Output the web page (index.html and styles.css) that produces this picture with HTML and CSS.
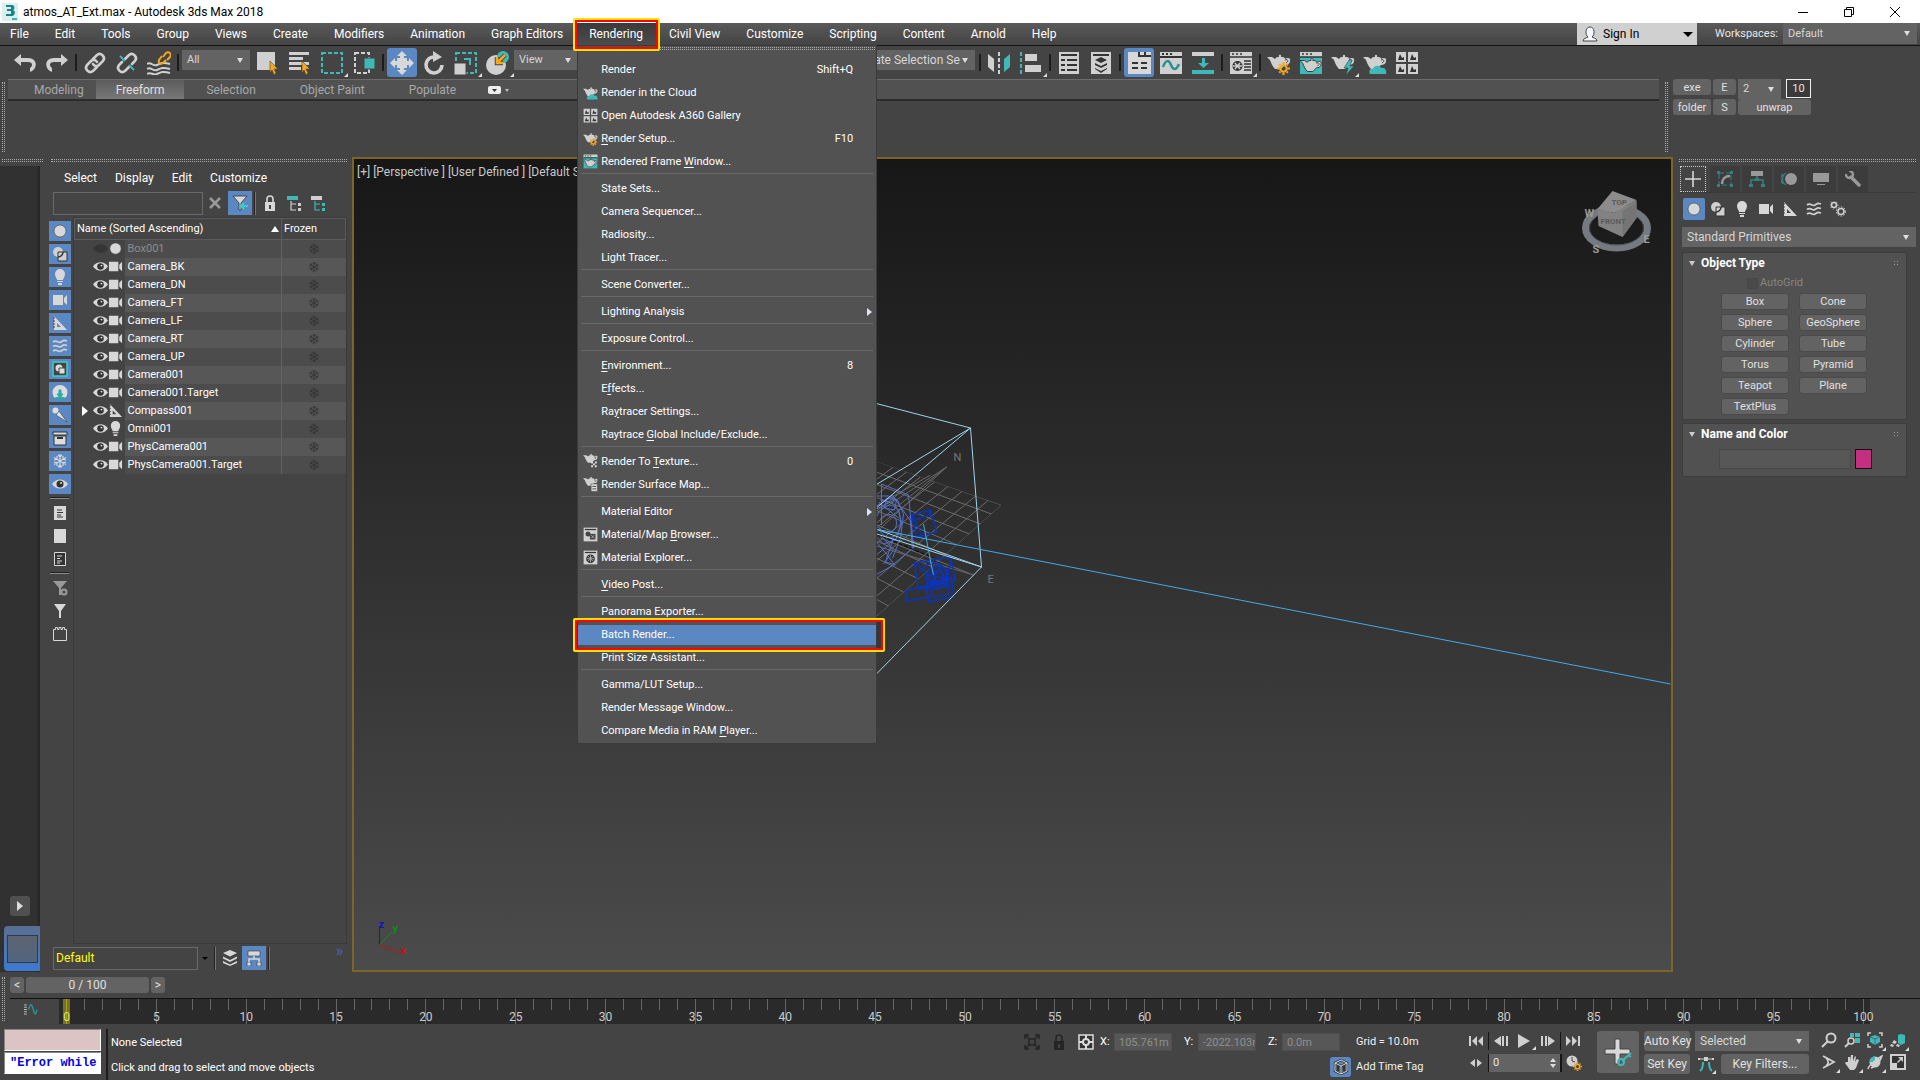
FILE: index.html
```html
<!DOCTYPE html>
<html lang="en">
<head>
<meta charset="UTF-8">
<meta name="viewport" content="width=device-width, initial-scale=1.0">
<title>atmos_AT_Ext.max - Autodesk 3ds Max 2018</title>
<link rel="stylesheet" href="styles.css">
</head>
<body>
<!-- icon set -->
<svg class="sprite" aria-hidden="true">
    <symbol id="i-undo" viewBox="0 0 22 18"><path d="M0 6l7-6v4h7c10 0 10 11 2 14v-4c3-2 3-6-2-6H7v4z" fill="#d0d0d0"/></symbol>
    <symbol id="i-redo" viewBox="0 0 22 18"><path d="M22 6l-7-6v4H8c-10 0-10 11-2 14v-4c-3-2-3-6 2-6h7v4z" fill="#d0d0d0"/></symbol>
    <symbol id="i-link" viewBox="0 0 24 24"><g fill="none" stroke="#d0d0d0" stroke-width="2.6" stroke-linecap="round"><path d="M10 8l4-4c4-3 9 2 6 6l-4 4c-2 2-5 1-6-1"/><path d="M14 16l-4 4c-4 3-9-2-6-6l4-4c2-2 5-1 6 1"/></g></symbol>
    <symbol id="i-unlink" viewBox="0 0 24 24"><g fill="none" stroke="#d0d0d0" stroke-width="2.6" stroke-linecap="round"><path d="M10 8l4-4c4-3 9 2 6 6l-3 3"/><path d="M14 16l-4 4c-4 3-9-2-6-6l3-3"/></g><path d="M5 5l5 5M14 14l5 5" stroke="#3fb8b8" stroke-width="2" fill="none"/></symbol>
    <symbol id="i-bind" viewBox="0 0 24 24"><g fill="none" stroke="#d0d0d0" stroke-width="2"><path d="M0 13c4-3 6 3 10 1s6-3 13-1M0 18c4-3 6 3 10 1s6-3 13-1M0 23c4-3 6 2 10 0s6-3 13-1"/></g><g fill="none" stroke="#f5a81c" stroke-width="2"><path d="M16 6l3-4c3-2 6 1 4 4l-3 3"/><path d="M19 9l-3 3c-3 2-5-1-4-3l3-4"/></g></symbol>
    <symbol id="i-pick" viewBox="0 0 24 24"><path d="M1 1h18v18H1z" fill="#d0d0d0"/><path d="M14 10l8 8h-4l2 4-2 2-2-5-2 3z" fill="#f5a81c" stroke="#444" stroke-width=".6"/></symbol>
    <symbol id="i-pickname" viewBox="0 0 24 24"><path d="M1 1h20v3H1zM1 6h14v3H1zM1 11h20v3H1zM1 16h12v3H1z" fill="#d0d0d0"/><path d="M14 10l8 8h-4l2 4-2 2-2-5-2 3z" fill="#f5a81c" stroke="#444" stroke-width=".6"/></symbol>
    <symbol id="i-region" viewBox="0 0 24 24"><path d="M2 2h20v20H2z" fill="none" stroke="#3fb8b8" stroke-width="2" stroke-dasharray="4 2"/></symbol>
    <symbol id="i-cross" viewBox="0 0 24 24"><path d="M3 2h14v20H3z" fill="none" stroke="#d0d0d0" stroke-width="2" stroke-dasharray="4 2"/><path d="M12 7h11v11H12z" fill="#3fb8b8" stroke="#444"/></symbol>
    <symbol id="i-move" viewBox="0 0 24 24"><path d="M12 0l5 5h-3v5h5V7l5 5-5 5v-3h-5v5h3l-5 5-5-5h3v-5H5v3l-5-5 5-5v3h5V5H7z" fill="#d8d8d8"/><path d="M7 7h3v3H7zM14 7h3v3h-3zM7 14h3v3H7zM14 14h3v3h-3z" fill="#d8d8d8"/></symbol>
    <symbol id="i-rotate" viewBox="0 0 24 24"><path d="M13 6a8 8 0 1 0 7 8" fill="none" stroke="#d0d0d0" stroke-width="3.600"/><path d="M11 0l9 6-9 5z" fill="#d0d0d0"/></symbol>
    <symbol id="i-scale" viewBox="0 0 24 24"><path d="M2 2h20v20H2z" fill="none" stroke="#3fb8b8" stroke-width="2" stroke-dasharray="4 2"/><path d="M0 12h12v12H0z" fill="#d0d0d0" stroke="#444"/><path d="M10 8h6v6" fill="none" stroke="#3fb8b8" stroke-width="2"/></symbol>
    <symbol id="i-place" viewBox="0 0 24 24"><circle cx="10" cy="14" r="10" fill="#d0d0d0"/><circle cx="17" cy="6" r="6" fill="#3fb8b8"/><path d="M19 4l-7 7M11 6v6h6" fill="none" stroke="#444" stroke-width="4.500"/><path d="M19 4l-7 7M11 6v6h6" fill="none" stroke="#f5a81c" stroke-width="2.600"/></symbol>
    <symbol id="i-mirror" viewBox="0 0 24 24"><path d="M1 3l6 5v13l-6-5z" fill="#d0d0d0"/><path d="M12 1v22" stroke="#d0d0d0" stroke-width="2" stroke-dasharray="4 2"/><path d="M23 3l-6 5v13l6-5z" fill="#3fb8b8"/></symbol>
    <symbol id="i-align" viewBox="0 0 24 24"><path d="M2 1v22" stroke="#3fb8b8" stroke-width="2" stroke-dasharray="4 2"/><path d="M6 3h12v7H6zM6 14h16v7H6z" fill="#d0d0d0"/></symbol>
    <symbol id="i-list" viewBox="0 0 24 24"><path d="M2 1h20v22H2z" fill="#d0d0d0"/><path d="M4 4h16M4 9h4M10 9h10M4 14h4M10 14h10M4 19h4M10 19h10" stroke="#333" stroke-width="2"/></symbol>
    <symbol id="i-layers" viewBox="0 0 24 24"><path d="M2 1h20v22H2z" fill="#d0d0d0"/><path d="M4 4h16" stroke="#333" stroke-width="2"/><path d="M12 6l6 3-6 3-6-3zM6 12l6 3 6-3v2l-6 3-6-3zM6 17l6 3 6-3v1l-6 4-6-4z" fill="#333"/></symbol>
    <symbol id="i-ribbon" viewBox="0 0 24 24"><path d="M1 1h23v22H1z" fill="#d8d8d8"/><path d="M12 1v4h12M18 1v4M5 12h6M14 12h6M5 17h6M14 17h6" stroke="#333" stroke-width="2" fill="none"/></symbol>
    <symbol id="i-curve" viewBox="0 0 24 24"><path d="M1 1h22v22H1z" fill="#d0d0d0"/><path d="M1 6h22M3 3h2M7 3h2M11 3h2" stroke="#333" stroke-width="2"/><path d="M4 16c3-8 6-7 8-2s5 6 8-1" fill="none" stroke="#2a8f92" stroke-width="2.500"/></symbol>
    <symbol id="i-dope" viewBox="0 0 24 24"><path d="M1 1h22v4H1z" fill="#d0d0d0"/><path d="M1 19h22v4H1zM11 7h3v5h4l-5.500 5L7 12h4z" fill="#3fb8b8"/></symbol>
    <symbol id="i-mated" viewBox="0 0 24 24"><path d="M1 1h22v22H1z" fill="#d0d0d0"/><path d="M1 6h22M3 3h2M7 3h2M11 3h2M15 10h7M15 13h7M15 16h7M15 19h7" stroke="#333" stroke-width="1.500"/><circle cx="8.500" cy="15" r="5" fill="#333"/><path d="M6 12l5 6M11 12l-5 6M4 15h9" stroke="#d0d0d0" stroke-width="1.500"/></symbol>
    <symbol id="teapot" viewBox="0 0 24 24"><path d="M0 6h5l3 2c1-2 3-2 4-2-1-3 3-3 2 0 2 0 4 0 4 2 3-2 6-1 5 2 0 3-3 4-5 4l-4 4H8C6 16 4 12 3 9z" fill="#d0d0d0"/><path d="M18 9c3-1 4 1 1 3" fill="none" stroke="#444" stroke-width="1"/></symbol>
    <symbol id="gear" viewBox="0 0 12 12"><circle cx="6" cy="6" r="3" fill="none" stroke="#f5a81c" stroke-width="2"/><path d="M6 0v2M6 10v2M0 6h2M10 6h2M2 2l1 1M9 9l1 1M10 2L9 3M3 9l-1 1" stroke="#f5a81c" stroke-width="2"/></symbol>
    <symbol id="i-rsetup" viewBox="0 0 24 24"><use href="#teapot"/><use href="#gear" x="10" y="11" width="13" height="13"/></symbol>
    <symbol id="i-rframe" viewBox="0 0 24 24"><path d="M1 1h22v22H1z" fill="#3fb8b8"/><path d="M1 1h22v5H1z" fill="#d0d0d0"/><path d="M3 3h2M7 3h2M11 3h2M1 6h22" stroke="#333" stroke-width="1.600"/><g stroke="#333" stroke-width="1"><use href="#teapot" x="1" y="4" width="22" height="22"/></g></symbol>
    <symbol id="i-rprod" viewBox="0 0 24 24"><use href="#teapot"/><path d="M18 9l-5 8h4l-2 7 8-9h-4l2-6z" fill="#3fb8b8" stroke="#444" stroke-width=".6"/></symbol>
    <symbol id="i-rcloud" viewBox="0 0 24 24"><use href="#teapot"/><path d="M7 23c-2-4 1-6 3-5 1-4 7-4 8-1 4-1 6 3 5 6z" fill="#3fb8b8"/></symbol>
    <symbol id="i-gallery" viewBox="0 0 24 24"><path d="M1 1h10v10H1zM13 1h10v10H13zM1 13h10v10H1zM13 13h10v10H13z" fill="#d0d0d0"/><path d="M3 9l2-6 2 4 2-1v3zM15 9l2-6 2 4 2-1v3zM3 21l2-6 2 4 2-1v3zM15 21l2-6 2 4 2-1v3z" fill="#333"/></symbol>
    <symbol id="i-rtex" viewBox="0 0 24 24"><use href="#teapot" y="-4"/><path d="M13 12h3v3h-3zM19 12h3v3h-3zM16 15h3v3h-3zM13 18h3v3h-3zM19 18h3v3h-3z" fill="#ddd"/></symbol>
    <symbol id="i-rsurf" viewBox="0 0 24 24"><use href="#teapot" y="-4"/><path d="M13 11h10v12H13z" fill="#ddd" stroke="#555"/><path d="M15 15h6M15 19h6" stroke="#444" stroke-width="1.500"/></symbol>
    <symbol id="i-matx" viewBox="0 0 24 24"><path d="M1 1h22v22H1z" fill="#d0d0d0"/><path d="M3 4h18" stroke="#333" stroke-width="2"/><circle cx="12" cy="14" r="7" fill="#333"/><path d="M8 10l8 8M16 10l-8 8M6 14h12M12 8v12" stroke="#aaa" stroke-width="1.500"/></symbol>
    <symbol id="i-matb" viewBox="0 0 24 24"><path d="M1 1h22v22H1z" fill="#d0d0d0"/><path d="M3 4h18" stroke="#333" stroke-width="2"/><circle cx="8" cy="11" r="4" fill="#444"/><path d="M11 11h9v9h-9z" fill="#444"/><path d="M13 13l5 5M18 13l-5 5" stroke="#ccc"/></symbol>

    <symbol id="s-geo" viewBox="0 0 16 16"><circle cx="8" cy="8" r="6" fill="#d8d8d8" stroke="#444" stroke-width=".6"/></symbol>
    <symbol id="s-shape" viewBox="0 0 16 16"><circle cx="6" cy="6" r="5" fill="#d0d0d0"/><path d="M6 6h9v9H6z" fill="#d0d0d0" stroke="#333"/><path d="M11 6a5 5 0 0 1-5 5" fill="none" stroke="#333" stroke-width="1.500"/></symbol>
    <symbol id="s-light" viewBox="0 0 16 16"><path d="M8 0a5 5 0 0 1 5 5c0 3-2 4-2 6H5c0-2-2-3-2-6a5 5 0 0 1 5-5zM5 12h6v1H5zM6 14h4v2H6z" fill="#d8d8d8"/></symbol>
    <symbol id="s-cam" viewBox="0 0 16 16"><path d="M1 3h10v10H1zM15 3v10l-3-3V6z" fill="#d8d8d8"/></symbol>
    <symbol id="s-help" viewBox="0 0 16 16"><path d="M2 1l13 14H2zM5 8v4h4z" fill="#d8d8d8" fill-rule="evenodd"/><path d="M1 3h2M1 6h2M1 9h2M1 12h2" stroke="#444"/></symbol>
    <symbol id="s-warp" viewBox="0 0 16 16"><path d="M1 4c4-3 5 2 8 0s3-2 6-1M1 8.500c4-3 5 2 8 0s3-2 6-1M1 13c4-3 5 2 8 0s3-2 6-1" fill="none" stroke="#d0d0d0" stroke-width="1.600"/></symbol>
    <symbol id="s-group" viewBox="0 0 16 16"><path d="M1 1h14v14H1z" fill="#444" stroke="#3fd0c8" stroke-width="1.500"/><circle cx="7" cy="7" r="3.500" fill="#ddd"/><path d="M7 7h6v6H7z" fill="#ddd" stroke="#444"/></symbol>
    <symbol id="s-xref" viewBox="0 0 16 16"><path d="M3 14a7.500 7.500 0 1 1 10 0z" fill="#ddd"/><path d="M7 6h2v4h2l-3 4-3-4h2zM4 13v2h8v-2" fill="#2fa8a4" stroke="#2fa8a4"/></symbol>
    <symbol id="s-bone" viewBox="0 0 16 16"><circle cx="3.500" cy="3.500" r="3" fill="#ddd"/><path d="M7 4l8 11L4 8z" fill="#ddd" stroke="#444" stroke-width=".6"/></symbol>
    <symbol id="s-box" viewBox="0 0 16 16"><path d="M1 2h14v3H1zM2 6h12v9H2z" fill="#ddd" stroke="#333"/><path d="M5 8h6" stroke="#333" stroke-width="2"/></symbol>
    <symbol id="s-snow" viewBox="0 0 16 16"><path d="M8 1v14M2 4.500l12 7M14 4.500l-12 7M6 2l2 2 2-2M6 14l2-2 2 2M2 7l3-1V3M14 9l-3 1v3M2 9l3 1v3M14 7l-3-1V3" fill="none" stroke="currentColor" stroke-width="1.200"/></symbol>
    <symbol id="s-eye" viewBox="0 0 16 16"><path d="M0 8c4-6 12-6 16 0-4 6-12 6-16 0z" fill="#d8d8d8"/><circle cx="8" cy="8" r="3.500" fill="#333"/><circle cx="9" cy="7" r="1" fill="#ddd"/></symbol>
    <symbol id="s-eyeoff" viewBox="0 0 16 16"><path d="M0 8c4-6 12-6 16 0-4 6-12 6-16 0z" fill="#353535"/></symbol>
    <symbol id="s-docall" viewBox="0 0 16 16"><path d="M2 1h12v14H2z" fill="#d8d8d8"/><path d="M5 5h5M5 7.500h6M5 10h4M5 12h6" stroke="#333"/></symbol>
    <symbol id="s-doc" viewBox="0 0 16 16"><path d="M2 1h12v14H2z" fill="#d8d8d8"/></symbol>
    <symbol id="s-docinv" viewBox="0 0 16 16"><path d="M2.500 1.500h11v13h-11z" fill="#333" stroke="#d8d8d8"/><path d="M5 5h5M5 7.500h3M5 10h5M5 12h3" stroke="#ddd"/></symbol>
    <symbol id="s-funnel" viewBox="0 0 16 16"><path d="M2 1h12L9 8v7H7V8z" fill="#d8d8d8"/></symbol>
    <symbol id="s-funnelgear" viewBox="0 0 16 16"><path d="M1 1h14L9 8v7H7V8z" fill="#999"/><circle cx="12" cy="12" r="2.500" fill="#444" stroke="#999" stroke-width="2"/></symbol>
    <symbol id="s-castle" viewBox="0 0 16 16"><path d="M1.500 3.500h2v-2h2v2h1.500v-2h2v2h1.500v-2h2v2h2v11h-13z" fill="none" stroke="#d8d8d8"/></symbol>
    <symbol id="s-filter" viewBox="0 0 16 16"><path d="M1 1h14L9 8v7H7V8z" fill="#d8d8d8" stroke="#333" stroke-width=".8"/><path d="M16 11h-5M12 8l-3 3 3 3" fill="none" stroke="#35d0c8" stroke-width="2"/></symbol>
    <symbol id="s-lock" viewBox="0 0 16 16"><path d="M5 7V4a3 3 0 0 1 6 0v3" fill="none" stroke="currentColor" stroke-width="1.600"/><path d="M3 7h10v9H3z" fill="currentColor"/><path d="M8 10v4" stroke="#444" stroke-width="2"/></symbol>
    <symbol id="s-treea" viewBox="0 0 16 16"><path d="M1 1h11v4H1z" fill="#3fb8b8"/><path d="M5 6v9h5M5 9h5" fill="none" stroke="#d0d0d0" stroke-width="1.200"/><path d="M12 8h3v3h-3zM12 13h3v3h-3z" fill="#d0d0d0"/></symbol>
    <symbol id="s-treeb" viewBox="0 0 16 16"><path d="M1 1h11v4H1z" fill="#d0d0d0"/><path d="M5 6v9h5M5 9h5" fill="none" stroke="#3fb8b8" stroke-width="1.200"/><path d="M12 8h3v3h-3zM12 13h3v3h-3z" fill="#3fb8b8"/></symbol>
    <symbol id="s-stack" viewBox="0 0 16 16"><path d="M8 0l7 3-7 3.500L1 3zM1 6.500L8 10l7-3.500v2L8 12 1 8.500zM1 11l7 3.500L15 11v2l-7 3-7-3z" fill="#d8d8d8"/></symbol>
    <symbol id="s-hier" viewBox="0 0 16 16"><path d="M2 1h12v5H2zM1 12h4v4H1zM11 12h4v4h-4z" fill="#d8d8d8" stroke="#333" stroke-width=".6"/><path d="M8 6v3M3 12V9h10v3" fill="none" stroke="#d8d8d8" stroke-width="1.500"/></symbol>
    <symbol id="s-gears" viewBox="0 0 16 16"><circle cx="4" cy="4" r="2.500" fill="none" stroke="#d0d0d0" stroke-width="1.600" /><circle cx="4" cy="4" r="4" fill="none" stroke="#d0d0d0" stroke-dasharray="1 2"/><circle cx="11" cy="10.500" r="3" fill="none" stroke="#d0d0d0" stroke-width="1.600"/><circle cx="11" cy="10.500" r="4.600" fill="none" stroke="#d0d0d0" stroke-dasharray="1.500 1.500"/></symbol>
    <symbol id="t-plus" viewBox="0 0 16 16"><path d="M8 0v16M0 8h16" stroke="#d8d8d8" stroke-width="1.600"/></symbol>
    <symbol id="t-modify" viewBox="0 0 16 16"><path d="M2 2h12v12H2z" fill="none" stroke="#35807e" stroke-dasharray="5 2"/><path d="M5 13c0-5 3-8 8-8" fill="none" stroke="#999" stroke-width="2.500"/><path d="M0 0h3v3H0zM13 0h3v3h-3zM0 13h3v3H0zM13 13h3v3h-3z" fill="#35807e"/></symbol>
    <symbol id="t-hier" viewBox="0 0 16 16"><path d="M2 0h12v5H2z" fill="#999"/><path d="M8 5v4M2 13V9h12v4" fill="none" stroke="#35807e" stroke-width="1.500"/><path d="M0 13h4v3H0zM12 13h4v3h-4zM6 7h4v3H6z" fill="#35807e"/></symbol>
    <symbol id="t-motion" viewBox="0 0 16 16"><circle cx="10" cy="8" r="6" fill="#999"/><path d="M5 2a7 7 0 0 0 0 12M2 3a7 7 0 0 0 0 10" fill="none" stroke="#35807e" stroke-width="1.200"/></symbol>
    <symbol id="t-display" viewBox="0 0 16 16"><path d="M0 2h16v9H0zM4 13h8v1H4z" fill="#999"/></symbol>
    <symbol id="t-util" viewBox="0 0 16 16"><path d="M6 6l8 8" stroke="#999" stroke-width="3.500" stroke-linecap="round"/><path d="M1 3a3.500 3.500 0 1 0 3-3" fill="none" stroke="#999" stroke-width="2.400"/></symbol>

    <symbol id="p-start" viewBox="0 0 16 16"><path d="M1 3h2v10H1zM9 3v10L4 8zM15 3v10l-5-5z" fill="#d0d0d0"/></symbol>
    <symbol id="p-prev" viewBox="0 0 16 16"><path d="M8 3v10L1 8zM9 3h2v10H9zM13 3h2v10h-2z" fill="#d0d0d0"/></symbol>
    <symbol id="p-play" viewBox="0 0 16 16"><path d="M2 1l12 7-12 7z" fill="#d0d0d0"/></symbol>
    <symbol id="p-next" viewBox="0 0 16 16"><path d="M8 3v10l7-5zM1 3h2v10H1zM5 3h2v10H5z" fill="#d0d0d0"/></symbol>
    <symbol id="p-end" viewBox="0 0 16 16"><path d="M13 3h2v10h-2zM1 3v10l5-5zM7 3v10l5-5z" fill="#d0d0d0"/></symbol>
    <symbol id="p-key" viewBox="0 0 16 16"><path d="M7 4v8L2 8zM9 4v8l5-4z" fill="#d0d0d0"/></symbol>
    <symbol id="p-time" viewBox="0 0 16 16"><circle cx="6" cy="6" r="5.500" fill="#d0d0d0"/><path d="M6 2v4l3 1" fill="none" stroke="#444"/><use href="#gear" x="7" y="7" width="9" height="9"/></symbol>
    <symbol id="p-setkey" viewBox="0 0 30 30"><path d="M12 2h5v10h10v5H17v10h-5V17H2v-5h10z" fill="#d8d8d8" stroke="#444"/><path d="M19 24l9-8M25 18l3 2" stroke="#3fb8b8" stroke-width="2"/><circle cx="18" cy="25" r="3" fill="none" stroke="#3fb8b8" stroke-width="2"/></symbol>
    <symbol id="p-tan" viewBox="0 0 16 16"><path d="M2 3h12" stroke="#d0d0d0"/><path d="M6 1h4v4H6zM0 2h2v2H0zM14 2h2v2h-2z" fill="#d0d0d0"/><path d="M2 15c3-2 3-6 3-9M14 15c-3-2-3-6-3-9" fill="none" stroke="#3fb8b8" stroke-width="2"/></symbol>
    <symbol id="n-zoom" viewBox="0 0 16 16"><circle cx="10" cy="6" r="4.500" fill="none" stroke="#d0d0d0" stroke-width="2"/><path d="M7 9l-6 6" stroke="#d0d0d0" stroke-width="2"/></symbol>
    <symbol id="n-zoomall" viewBox="0 0 16 16"><path d="M6 1h4v4H6zM11 1h5v4h-5zM11 6h5v5h-5z" fill="#3fb8b8"/><circle cx="7" cy="9" r="3" fill="#444" stroke="#d0d0d0" stroke-width="1.500"/><path d="M5 11l-4 4" stroke="#d0d0d0" stroke-width="2"/></symbol>
    <symbol id="n-extents" viewBox="0 0 16 16"><path d="M1 4V1h3M12 1h3v3M15 12v3h-3M4 15H1v-3" fill="none" stroke="#d0d0d0" stroke-width="1.500"/><path d="M8 3l5 2v5l-5 3-5-3V5z" fill="#3fb8b8"/><path d="M3 5l5 2 5-2M8 7v6" fill="none" stroke="#444" stroke-width=".6"/></symbol>
    <symbol id="n-extall" viewBox="0 0 16 16"><path d="M11 2l4 1v8l-4 2-3-2V3z" fill="#3fb8b8"/><path d="M4 8l3 2-2 2-3-1zM1 12l3 1-1 2-3-1zM7 12l3 1-1 2-3-1z" fill="#d0d0d0"/></symbol>
    <symbol id="n-fov" viewBox="0 0 16 16"><path d="M2 2l11 6-11 6M5 4c3 2 3 6 0 8" fill="none" stroke="#d0d0d0" stroke-width="1.800"/></symbol>
    <symbol id="n-pan" viewBox="0 0 16 16"><path d="M4 8V3h2v4l1-6h2v6l2-5 1 1-1 5 2-3 2 1-3 8-2 2H6l-5-7 1-1z" fill="#d0d0d0"/></symbol>
    <symbol id="n-orbit" viewBox="0 0 16 16"><circle cx="8" cy="8" r="5.500" fill="#d0d0d0"/><path d="M8 8V2a6 6 0 0 0-5 6z" fill="#3fb8b8"/><path d="M1 15c1-5 12-12 14-13-1 4-7 11-11 12" fill="none" stroke="#d0d0d0" stroke-width="1.500"/></symbol>
    <symbol id="n-max" viewBox="0 0 16 16"><path d="M1 1h14v14H1z" fill="#333" stroke="#d0d0d0" stroke-width="2"/><path d="M1 9h6v6H1zM8 3h5v5l-2-2-3 3-1-1 3-3z" fill="#d0d0d0"/></symbol>
    <symbol id="b-iso" viewBox="0 0 16 16"><path d="M1 5V1h4M11 1h4v4M15 11v4h-4M5 15H1v-4M5 5h6v6H5zM2 2l3 3M14 2l-3 3M14 14l-3-3M2 14l3-3" fill="none" stroke="#252525" stroke-width="1.500"/></symbol>
    <symbol id="b-abs" viewBox="0 0 16 16"><path d="M1 1h14v14H1z" fill="#333" stroke="#ddd" stroke-width="1.500"/><circle cx="8" cy="8" r="3" fill="none" stroke="#ddd" stroke-width="2"/><path d="M8 1v4M8 11v4M1 8h4M11 8h4" stroke="#ddd" stroke-width="2"/></symbol>
    <symbol id="b-tag" viewBox="0 0 16 16"><path d="M8 1l6 3v8l-6 3-6-3V4zM2 4l6 3 6-3M8 7v8M5 5v7M11 5v7" fill="none" stroke="#333" stroke-width="2.400"/><path d="M8 1l6 3v8l-6 3-6-3V4zM2 4l6 3 6-3M8 7v8" fill="none" stroke="#ddd"/></symbol>
</svg>

<div class="app">
    <header class="titlebar">
        <svg class="logo" viewBox="0 0 16 18"><path d="M0 0h16v18H0z" fill="#dceeee"/><path d="M4 2h6c3 0 3 5 1 5 3 1 2 6-1 6H4v-2h5V8H5V6h4V4H4z" fill="#12868a"/><path d="M10 15h5v2h-5z" fill="#3bb"/></svg>
        <h1 class="title">atmos_AT_Ext.max - Autodesk 3ds Max 2018</h1>
        <div class="window-buttons">
            <button aria-label="Minimize"><svg viewBox="0 0 12 12"><path d="M1 6.500h10" stroke="#000"/></svg></button>
            <button aria-label="Restore"><svg viewBox="0 0 12 12"><path d="M1.500 3.500h7v7h-7zM3.500 3.500v-2h7v7h-2" fill="none" stroke="#000"/></svg></button>
            <button aria-label="Close"><svg viewBox="0 0 12 12"><path d="M1 1l10 10M11 1L1 11" stroke="#000" fill="none"/></svg></button>
        </div>
    </header>

    <nav class="menubar">
        <ul class="menus">
            <li><button>File</button></li>
            <li><button>Edit</button></li>
            <li><button>Tools</button></li>
            <li><button>Group</button></li>
            <li><button>Views</button></li>
            <li><button>Create</button></li>
            <li><button>Modifiers</button></li>
            <li><button>Animation</button></li>
            <li><button>Graph Editors</button></li>
            <li class="open">
                <button>Rendering</button>
                <div class="dropdown">
                    <div class="grip"></div>
                    <button class="item">Render<kbd>Shift+Q</kbd></button>
                    <button class="item"><svg><use href="#i-rcloud"/></svg>Render in the Cloud</button>
                    <button class="item"><svg><use href="#i-gallery"/></svg>Open Autodesk A360 Gallery</button>
                    <button class="item"><svg><use href="#i-rsetup"/></svg><span><u>R</u>ender Setup...</span><kbd>F10</kbd></button>
                    <button class="item"><svg><use href="#i-rframe"/></svg><span>Rendered Frame <u>W</u>indow...</span></button>
                    <hr>
                    <button class="item">State Sets...</button>
                    <button class="item">Camera Sequencer...</button>
                    <button class="item">Radiosity...</button>
                    <button class="item">Light Tracer...</button>
                    <hr>
                    <button class="item">Scene Converter...</button>
                    <hr>
                    <button class="item more">Lighting Analysis</button>
                    <hr>
                    <button class="item">Exposure Control...</button>
                    <hr>
                    <button class="item"><span><u>E</u>nvironment...</span><kbd>8</kbd></button>
                    <button class="item"><span>E<u>f</u>fects...</span></button>
                    <button class="item"><span>Ra<u>y</u>tracer Settings...</span></button>
                    <button class="item"><span>Raytrace <u>G</u>lobal Include/Exclude...</span></button>
                    <hr>
                    <button class="item"><svg><use href="#i-rtex"/></svg><span>Render To <u>T</u>exture...</span><kbd>0</kbd></button>
                    <button class="item"><svg><use href="#i-rsurf"/></svg>Render Surface Map...</button>
                    <hr>
                    <button class="item more">Material Editor</button>
                    <button class="item"><svg><use href="#i-matb"/></svg><span>Material/Map <u>B</u>rowser...</span></button>
                    <button class="item"><svg><use href="#i-matx"/></svg>Material Explorer...</button>
                    <hr>
                    <button class="item"><span><u>V</u>ideo Post...</span></button>
                    <hr>
                    <button class="item">Panorama Exporter...</button>
                    <button class="item selected">Batch Render...<i class="callout"></i></button>
                    <button class="item">Print Size Assistant...</button>
                    <hr>
                    <button class="item">Gamma/LUT Setup...</button>
                    <button class="item">Render Message Window...</button>
                    <button class="item"><span>Compare Media in RAM <u>P</u>layer...</span></button>
                </div>
                <i class="callout"></i>
            </li>
            <li><button>Civil View</button></li>
            <li><button>Customize</button></li>
            <li><button>Scripting</button></li>
            <li><button>Content</button></li>
            <li><button>Arnold</button></li>
            <li><button>Help</button></li>
        </ul>
        <button class="signin">
            <svg viewBox="0 0 16 16"><path d="M1 15c0-3 4-3 5-4-3-2-3-10 2-10s5 8 2 10c1 1 5 1 5 4z" fill="#f4f7fb" stroke="#444"/></svg>
            <span>Sign In</span>
            <i class="caret"></i>
        </button>
        <label class="workspaces-label" for="workspace">Workspaces:</label>
        <select class="workspace" id="workspace"><option>Default</option></select>
    </nav>

    <div class="toolbar">
        <button aria-label="Undo"><svg class="sm"><use href="#i-undo"/></svg></button>
        <button aria-label="Redo"><svg class="sm"><use href="#i-redo"/></svg></button>
        <i class="sep"></i>
        <button aria-label="Link"><svg><use href="#i-link"/></svg></button>
        <button aria-label="Unlink"><svg><use href="#i-unlink"/></svg></button>
        <button aria-label="Bind to Space Warp"><svg><use href="#i-bind"/></svg></button>
        <i class="sep"></i>
        <select class="filter" aria-label="Selection Filter"><option>All</option></select>
        <button aria-label="Select Object"><svg><use href="#i-pick"/></svg></button>
        <button aria-label="Select by Name"><svg><use href="#i-pickname"/></svg></button>
        <button class="fly" aria-label="Selection Region"><svg><use href="#i-region"/></svg></button>
        <button aria-label="Window/Crossing"><svg><use href="#i-cross"/></svg></button>
        <i class="sep"></i>
        <button class="active" aria-label="Move"><svg><use href="#i-move"/></svg></button>
        <button aria-label="Rotate"><svg><use href="#i-rotate"/></svg></button>
        <button class="fly" aria-label="Scale"><svg><use href="#i-scale"/></svg></button>
        <button class="fly" aria-label="Place"><svg><use href="#i-place"/></svg></button>
        <select class="coords" aria-label="Reference Coordinate System"><option>View</option></select>
        <select class="selset" aria-label="Named Selection Sets"><option>Create Selection Se</option></select>
        <i class="sep"></i>
        <button aria-label="Mirror"><svg><use href="#i-mirror"/></svg></button>
        <button class="fly" aria-label="Align"><svg><use href="#i-align"/></svg></button>
        <i class="sep"></i>
        <button aria-label="Scene Explorer"><svg><use href="#i-list"/></svg></button>
        <button aria-label="Layer Explorer"><svg><use href="#i-layers"/></svg></button>
        <i class="sep"></i>
        <button class="active" aria-label="Toggle Ribbon"><svg><use href="#i-ribbon"/></svg></button>
        <button aria-label="Curve Editor"><svg><use href="#i-curve"/></svg></button>
        <button aria-label="Schematic View"><svg><use href="#i-dope"/></svg></button>
        <i class="sep"></i>
        <button class="fly" aria-label="Material Editor"><svg><use href="#i-mated"/></svg></button>
        <i class="sep"></i>
        <button aria-label="Render Setup"><svg><use href="#i-rsetup"/></svg></button>
        <button aria-label="Rendered Frame Window"><svg><use href="#i-rframe"/></svg></button>
        <button class="fly" aria-label="Render Production"><svg><use href="#i-rprod"/></svg></button>
        <button aria-label="Render in the Cloud"><svg><use href="#i-rcloud"/></svg></button>
        <button aria-label="Open A360 Gallery"><svg><use href="#i-gallery"/></svg></button>
    </div>

    <div class="ribbon-row">
        <div class="vgrip"></div>
        <div class="ribbon">
            <button>Modeling</button>
            <button class="current">Freeform</button>
            <button>Selection</button>
            <button>Object Paint</button>
            <button>Populate</button>
            <button class="ribbon-menu" aria-label="Ribbon options"><svg viewBox="0 0 22 10"><rect width="13" height="8" y="1" rx="2" fill="#eee"/><path d="M4 4h5L6.500 7z" fill="#333"/><path d="M17 4h4l-2 3z" fill="#bbb"/></svg></button>
        </div>
        <div class="scripts">
            <div class="vgrip"></div>
            <div class="script-grid">
                <button class="btn">exe</button>
                <button class="btn">E</button>
                <select aria-label="Count"><option>2</option></select>
                <input type="text" value="10" aria-label="Size">
                <button class="btn">folder</button>
                <button class="btn">S</button>
                <button class="btn unwrap">unwrap</button>
            </div>
        </div>
    </div>

    <main class="workarea">
        <aside class="strip">
            <div class="grip"></div>
            <div class="strip-body">
                <button class="expand" aria-label="Expand"><i></i></button>
                <button class="layout" aria-label="Viewport Layout"><i></i></button>
            </div>
        </aside>

        <section class="explorer">
            <div class="grip"></div>
            <div class="explorer-menu">
                <button>Select</button><button>Display</button><button>Edit</button><button>Customize</button>
            </div>
            <div class="explorer-find">
                <input type="text" aria-label="Find">
                <button aria-label="Clear"><svg viewBox="0 0 16 16"><path d="M3 3l10 10M13 3L3 13" stroke="#999" stroke-width="2.500"/></svg></button>
                <button class="active" aria-label="Filter"><svg><use href="#s-filter"/></svg></button>
                <i class="bar"></i>
                <button aria-label="Lock"><svg><use href="#s-lock"/></svg></button>
                <button aria-label="Expand tree"><svg><use href="#s-treea"/></svg></button>
                <button aria-label="Collapse tree"><svg><use href="#s-treeb"/></svg></button>
            </div>
            <div class="explorer-body">
                <div class="categories">
                    <button class="active" aria-label="Geometry"><svg><use href="#s-geo"/></svg></button>
                    <button class="active" aria-label="Shapes"><svg><use href="#s-shape"/></svg></button>
                    <button class="active" aria-label="Lights"><svg><use href="#s-light"/></svg></button>
                    <button class="active" aria-label="Cameras"><svg><use href="#s-cam"/></svg></button>
                    <button class="active" aria-label="Helpers"><svg><use href="#s-help"/></svg></button>
                    <button class="active" aria-label="Space Warps"><svg><use href="#s-warp"/></svg></button>
                    <button class="active" aria-label="Groups"><svg><use href="#s-group"/></svg></button>
                    <button class="active" aria-label="XRefs"><svg><use href="#s-xref"/></svg></button>
                    <button class="active" aria-label="Bones"><svg><use href="#s-bone"/></svg></button>
                    <button class="active" aria-label="Containers"><svg><use href="#s-box"/></svg></button>
                    <button class="active" aria-label="Frozen"><svg><use href="#s-snow"/></svg></button>
                    <button class="active" aria-label="Hidden"><svg><use href="#s-eye"/></svg></button>
                    <hr>
                    <button aria-label="All"><svg><use href="#s-docall"/></svg></button>
                    <button aria-label="None"><svg><use href="#s-doc"/></svg></button>
                    <button aria-label="Invert"><svg><use href="#s-docinv"/></svg></button>
                    <hr>
                    <button aria-label="Configure filter"><svg><use href="#s-funnelgear"/></svg></button>
                    <button aria-label="Filter"><svg><use href="#s-funnel"/></svg></button>
                    <button aria-label="Containers"><svg><use href="#s-castle"/></svg></button>
                </div>
                <div class="tree">
                    <table>
                        <colgroup><col class="col-icons"><col><col class="col-frozen"></colgroup>
                        <thead>
                            <tr><th colspan="2">Name (Sorted Ascending)<i class="sort"></i></th><th>Frozen</th></tr>
                        </thead>
                        <tbody>
                            <tr class="off"><td><svg><use href="#s-eyeoff"/></svg><svg><use href="#s-geo"/></svg></td><td>Box001</td><td><svg><use href="#s-snow"/></svg></td></tr>
                            <tr><td><svg><use href="#s-eye"/></svg><svg><use href="#s-cam"/></svg></td><td>Camera_BK</td><td><svg><use href="#s-snow"/></svg></td></tr>
                            <tr><td><svg><use href="#s-eye"/></svg><svg><use href="#s-cam"/></svg></td><td>Camera_DN</td><td><svg><use href="#s-snow"/></svg></td></tr>
                            <tr><td><svg><use href="#s-eye"/></svg><svg><use href="#s-cam"/></svg></td><td>Camera_FT</td><td><svg><use href="#s-snow"/></svg></td></tr>
                            <tr><td><svg><use href="#s-eye"/></svg><svg><use href="#s-cam"/></svg></td><td>Camera_LF</td><td><svg><use href="#s-snow"/></svg></td></tr>
                            <tr><td><svg><use href="#s-eye"/></svg><svg><use href="#s-cam"/></svg></td><td>Camera_RT</td><td><svg><use href="#s-snow"/></svg></td></tr>
                            <tr><td><svg><use href="#s-eye"/></svg><svg><use href="#s-cam"/></svg></td><td>Camera_UP</td><td><svg><use href="#s-snow"/></svg></td></tr>
                            <tr><td><svg><use href="#s-eye"/></svg><svg><use href="#s-cam"/></svg></td><td>Camera001</td><td><svg><use href="#s-snow"/></svg></td></tr>
                            <tr><td><svg><use href="#s-eye"/></svg><svg><use href="#s-cam"/></svg></td><td>Camera001.Target</td><td><svg><use href="#s-snow"/></svg></td></tr>
                            <tr class="parent"><td><svg><use href="#s-eye"/></svg><svg><use href="#s-help"/></svg></td><td>Compass001</td><td><svg><use href="#s-snow"/></svg></td></tr>
                            <tr><td><svg><use href="#s-eye"/></svg><svg><use href="#s-light"/></svg></td><td>Omni001</td><td><svg><use href="#s-snow"/></svg></td></tr>
                            <tr><td><svg><use href="#s-eye"/></svg><svg><use href="#s-cam"/></svg></td><td>PhysCamera001</td><td><svg><use href="#s-snow"/></svg></td></tr>
                            <tr><td><svg><use href="#s-eye"/></svg><svg><use href="#s-cam"/></svg></td><td>PhysCamera001.Target</td><td><svg><use href="#s-snow"/></svg></td></tr>
                        </tbody>
                    </table>
                </div>
            </div>
            <div class="explorer-foot">
                <input type="text" value="Default" aria-label="Explorer name">
                <i class="caret"></i>
                <i class="bar"></i>
                <button aria-label="Layers"><svg><use href="#s-stack"/></svg></button>
                <button class="active" aria-label="Hierarchy"><svg><use href="#s-hier"/></svg></button>
                <i class="bar"></i>
                <span class="overflow">»</span>
            </div>
        </section>

        <section class="viewport">
            <span class="viewport-label">[+] [Perspective ] [User Defined ] [Default Shading ]</span>
            <svg class="scene" viewBox="354 159 1316 811">
                <defs>
                    <clipPath id="ground"><path d="M870 459.500L1001 505 870 622z"/></clipPath>
                </defs>
                <g clip-path="url(#ground)" stroke="#6b6b6b" fill="none">
                    <path d="M1001 505L870 459M991 514L870 470M980 524L870 482M969 534L870 495M957 545L870 508M945 555L870 522M932 567L870 538M918 579L870 555M903 592L870 575M888 606L870 596"/>
                    <path d="M1001 505L870 622M988 500L860 610M975 496L850 600M962 491L840 590M948 486L830 580M934 482L820 572M920 477L810 562M906 472L800 552M893 467L790 542"/>
                </g>
                <path d="M876 532L946 467M876 523L946 467M876 513L946 467M876 506L930 475M880 538L973 575M876 546L973 575" stroke="#686868" fill="none"/>
                <g stroke="#5572cc" fill="none">
                    <path d="M881 525v-41l27 11 5 52-18 17-20 11M876 506l16-11 18 26 2 30M876 496h12l9 4 6 14-3 24-8 20M880 500l10 2 8 8 3 14-6 16-12 4-8-8"/>
                    <path d="M876 509l18-9M878 502l20 16M876 517c8-18 24-14 24 4s-14 22-22 8M879 521c5-10 17-8 17 2s-12 14-18 4M876 542l10 12 8 11M881 536l12 14-10 14M893 538l-8 24 10 3M886 498l10 2-2 10-10-2zM876 555l16-14"/>
                </g>
                <g stroke="#0a34c0" fill="none" stroke-width="1.500">
                    <path d="M911 515l19-5 6 22-20 5zM915 520l16-6M930 510l-2 5M912 515l10 22"/>
                    <path d="M914 563l36-6 5 24-37 8zM905 591l20-5 3 11-22 4zM926 584l25-6 2 19-25 5zM930 590l18-4 1 8-17 3zM921 573c2-14 27-14 25 6M925 575l20 3-16 10 10-20 9 17-22-6M932 568l6 22M924 588l26-10M951 559l-6 22M914 563l14 12"/>
                    <circle cx="936" cy="578" r="7"/><circle cx="937" cy="577" r="11"/>
                </g>
                <path d="M876 534L933 558" stroke="#000" stroke-dasharray="4 2"/>
                <path d="M870 402L970 428 981 567 870 680M970 428L870 488M970 428L870 513M981 567L870 527M981 567L870 532" stroke="#9fd4ea" fill="none"/>
                <path d="M923 524L931 566 933 575M870 528L1670 684" stroke="#42a9ea" fill="none"/>
                <text x="953" y="461" class="compass">N</text>
                <text x="987" y="583" class="compass">E</text>

                <!-- view cube -->
                <ellipse cx="1616" cy="228" rx="31" ry="20" fill="none" stroke="#747a80" stroke-width="7"/>
                <ellipse cx="1616" cy="228" rx="27" ry="17" fill="none" stroke="#4c5055" stroke-width="1"/>
                <path d="M1612 191l24 9-22 13-17-4z" fill="#8c8c8c"/>
                <path d="M1597 209l17 4 22-13v18l-14 19-24-11z" fill="#828282"/>
                <path d="M1622 211l14-9v16l-14 19z" fill="#757575"/>
                <text x="1611" y="205" class="cube">TOP</text>
                <text x="1600" y="224" class="cube">FRONT</text>
                <text x="1584" y="217" class="dir">W</text>
                <text x="1592" y="253" class="dir">S</text>
                <text x="1643" y="243" class="dir">E</text>

                <!-- axis tripod -->
                <path d="M379 945v-19" stroke="#1414b8"/><path d="M379 945l13-14" stroke="#148a1e"/><path d="M379 945l21 8" stroke="#c01414"/>
                <text x="378" y="928" class="axis z">z</text>
                <text x="392" y="932" class="axis y">y</text>
                <text x="400" y="954" class="axis x">x</text>
            </svg>
        </section>

        <aside class="command">
            <div class="grip"></div>
            <div class="tabs">
                <button class="current" aria-label="Create"><svg><use href="#t-plus"/></svg></button>
                <button aria-label="Modify"><svg><use href="#t-modify"/></svg></button>
                <button aria-label="Hierarchy"><svg><use href="#t-hier"/></svg></button>
                <button aria-label="Motion"><svg><use href="#t-motion"/></svg></button>
                <button aria-label="Display"><svg><use href="#t-display"/></svg></button>
                <button aria-label="Utilities"><svg><use href="#t-util"/></svg></button>
            </div>
            <div class="kinds">
                <button class="active" aria-label="Geometry"><svg><use href="#s-geo"/></svg></button>
                <button aria-label="Shapes"><svg><use href="#s-shape"/></svg></button>
                <button aria-label="Lights"><svg><use href="#s-light"/></svg></button>
                <button aria-label="Cameras"><svg><use href="#s-cam"/></svg></button>
                <button aria-label="Helpers"><svg><use href="#s-help"/></svg></button>
                <button aria-label="Space Warps"><svg><use href="#s-warp"/></svg></button>
                <button aria-label="Systems"><svg><use href="#s-gears"/></svg></button>
            </div>
            <select class="primitives" aria-label="Category"><option>Standard Primitives</option></select>
            <section class="rollout">
                <h2>Object Type</h2>
                <label class="autogrid"><input type="checkbox" disabled>AutoGrid</label>
                <div class="types">
                    <button class="btn">Box</button><button class="btn">Cone</button>
                    <button class="btn">Sphere</button><button class="btn">GeoSphere</button>
                    <button class="btn">Cylinder</button><button class="btn">Tube</button>
                    <button class="btn">Torus</button><button class="btn">Pyramid</button>
                    <button class="btn">Teapot</button><button class="btn">Plane</button>
                    <button class="btn">TextPlus</button>
                </div>
            </section>
            <section class="rollout">
                <h2>Name and Color</h2>
                <div class="name-color">
                    <input type="text" aria-label="Object name">
                    <button class="swatch" aria-label="Object color"></button>
                </div>
            </section>
        </aside>
    </main>

    <div class="timeline">
        <div class="vgrip"></div>
        <div class="timeline-body">
            <div class="slider-row">
                <button class="btn">&lt;</button>
                <button class="btn thumb">0 / 100</button>
                <button class="btn">&gt;</button>
            </div>
            <div class="track">
                <button class="mini" aria-label="Mini Curve Editor"><svg viewBox="0 0 16 12"><path d="M1 1h3M1 3.500h3M1 6h3M1 8.500h3M1 11h3" stroke="#ccc"/><path d="M6 6c2-7 3-7 5 0s3 6 4 0" fill="none" stroke="#2c9a9a" stroke-width="1.500"/></svg></button>
                <div class="frames"><div class="ticks" id="ticks"></div></div>
            </div>
        </div>
    </div>

    <footer class="status">
        <div class="listener">
            <input type="text" aria-label="Macro recorder">
            <input type="text" value="&quot;Error while" aria-label="Listener">
        </div>
        <div class="messages">
            <p>None Selected</p>
            <p>Click and drag to select and move objects</p>
        </div>
        <div class="coordinates">
            <div class="xyz">
                <button aria-label="Isolate"><svg><use href="#b-iso"/></svg></button>
                <button class="dark" aria-label="Selection Lock"><svg><use href="#s-lock"/></svg></button>
                <button aria-label="Absolute Mode"><svg><use href="#b-abs"/></svg></button>
                <label for="cx">X:</label><input id="cx" type="text" value="105.761m">
                <label for="cy">Y:</label><input id="cy" type="text" value="-2022.103m">
                <label for="cz">Z:</label><input id="cz" type="text" value="0.0m">
                <span class="grid-size">Grid = 10.0m</span>
            </div>
            <div class="tag">
                <button class="active" aria-label="Time Tag"><svg><use href="#b-tag"/></svg></button>
                <span class="grid-size">Add Time Tag</span>
            </div>
        </div>
        <div class="playback">
            <div>
                <button aria-label="Go to Start"><svg><use href="#p-start"/></svg></button>
                <button class="edge" aria-label="Previous Frame"><svg><use href="#p-prev"/></svg></button>
                <button class="fly" aria-label="Play"><svg><use href="#p-play"/></svg></button>
                <button aria-label="Next Frame"><svg><use href="#p-next"/></svg></button>
                <button class="edge" aria-label="Go to End"><svg><use href="#p-end"/></svg></button>
            </div>
            <div>
                <button aria-label="Key Mode"><svg><use href="#p-key"/></svg></button>
                <span class="spinner"><input type="text" value="0" aria-label="Current Frame"><i></i></span>
                <button aria-label="Time Configuration"><svg><use href="#p-time"/></svg></button>
            </div>
        </div>
        <div class="keys">
            <button class="btn bigkey" aria-label="Set Keys"><svg><use href="#p-setkey"/></svg></button>
            <div class="keymodes">
                <button class="btn">Auto Key</button>
                <button class="btn">Set Key</button>
            </div>
            <div class="keysets">
                <select aria-label="Key set"><option>Selected</option></select>
                <div>
                    <button class="fly" aria-label="Tangents"><svg><use href="#p-tan"/></svg></button>
                    <button class="btn">Key Filters...</button>
                </div>
            </div>
        </div>
        <div class="nav">
            <button aria-label="Zoom"><svg><use href="#n-zoom"/></svg></button>
            <button aria-label="Zoom All"><svg><use href="#n-zoomall"/></svg></button>
            <button class="fly" aria-label="Zoom Extents"><svg><use href="#n-extents"/></svg></button>
            <button class="fly" aria-label="Zoom Extents All"><svg><use href="#n-extall"/></svg></button>
            <button class="fly" aria-label="Field of View"><svg><use href="#n-fov"/></svg></button>
            <button class="fly" aria-label="Pan"><svg><use href="#n-pan"/></svg></button>
            <button class="fly" aria-label="Orbit"><svg><use href="#n-orbit"/></svg></button>
            <button aria-label="Maximize Viewport"><svg><use href="#n-max"/></svg></button>
        </div>
    </footer>
</div>

<script>
    // one tick per frame, a number on every fifth
    const ticks = document.getElementById("ticks");
    for (let frame = 0; frame <= 100; frame++) {
        const tick = document.createElement("div");
        tick.className = "tick";
        if (frame % 5 === 0) {
            tick.classList.add("major");
            const label = document.createElement("span");
            label.textContent = frame;
            tick.appendChild(label);
        }
        if (frame === 0) tick.classList.add("now");
        ticks.appendChild(tick);
    }
</script>
</body>
</html>
```

FILE: styles.css
```css
* {
    box-sizing: border-box;
}

body {
    margin: 0;
    background-color: #444;
    color: #e6e6e6;
    font-family: Roboto, Tahoma, sans-serif;
    font-size: 11px;
    line-height: 16px;
}

button, input, select {
    font: inherit;
    color: inherit;
    margin: 0;
    padding: 0;
    border: none;
    background: none;
    border-radius: 0;
}

ul, p, h1, h2 {
    margin: 0;
    padding: 0;
    list-style: none;
}

.sprite {
    position: absolute;
    width: 0;
    height: 0;
}

select {
    appearance: none;
    height: 20px;
    padding: 0 20px 0 5px;
    background: #636363 url("data:image/svg+xml,%3Csvg xmlns='http://www.w3.org/2000/svg' width='6' height='5'%3E%3Cpath d='M0 0h6L3 5z' fill='%23ddd'/%3E%3C/svg%3E") no-repeat right 7px center;
    color: #d6d6d6;
}

.btn {
    background-color: #636363;
    border-radius: 3px;
    color: #e0e0e0;
    text-align: center;
    white-space: nowrap;
}

.active {
    background-color: #5b87c2;
}

/* dotted drag handles */
.grip {
    height: 3px;
    border-top: 1px dotted #aaa;
    border-bottom: 1px dotted #aaa;
}

.vgrip {
    width: 3px;
    border-left: 1px dotted #aaa;
    border-right: 1px dotted #aaa;
}

/* small corner mark on buttons with a flyout */
.fly {
    position: relative;
}

.fly::after {
    content: "";
    position: absolute;
    right: 0;
    bottom: 0;
    border: 2px solid #ddd;
    border-left-color: transparent;
    border-top-color: transparent;
}

.caret {
    border: 5px solid transparent;
    border-top-color: #000;
    border-bottom: none;
}

.callout {
    position: absolute;
    border: 2px solid #ffe100;
    outline: 2px solid #f00;
    outline-offset: -4px;
    border-radius: 2px;
    pointer-events: none;
    z-index: 3;
}

.app {
    min-height: 100vh;
    display: flex;
    flex-direction: column;
}

/* title bar */
.titlebar {
    height: 23px;
    display: flex;
    align-items: center;
    background-color: #fff;
    color: #000;
    padding-left: 2px;
}

.logo {
    width: 16px;
    height: 18px;
    margin-right: 5px;
}

.title {
    flex: 1;
    font-size: 12px;
    font-weight: normal;
}

.window-buttons button {
    width: 46px;
    height: 20px;
}

.window-buttons {
    display: flex;
    padding-right: 2px;
}

.window-buttons svg {
    width: 12px;
    height: 12px;
    display: block;
    margin: 0 auto;
}

/* menu bar */
.menubar {
    height: 23px;
    display: flex;
    align-items: stretch;
    background: linear-gradient(#5a5a5a, #444);
    border-bottom: 1px solid #151515;
    font-size: 12px;
}

.menus {
    flex: 1;
    display: flex;
}

.menus li {
    position: relative;
    display: flex;
}

.menus li > button {
    padding: 0 13px;
    color: #fff;
}

.menus li:first-child > button {
    padding-left: 10px;
}

.open > button {
    background: linear-gradient(#3a3a3a, #4c4c4c);
}

.open > .callout {
    inset: -5px -4px -6px -3px;
}

.dropdown {
    position: absolute;
    top: 22px;
    left: 1px;
    width: 300px;
    padding-bottom: 1px;
    background-color: #525252;
    border: 1px solid #3b3b3b;
    font-size: 11px;
    z-index: 2;
}

.dropdown .grip {
    margin: 1px 1px 8px;
}

.dropdown .item {
    position: relative;
    display: flex;
    align-items: center;
    width: 100%;
    height: 23px;
    padding: 0 23px 0 23px;
    color: #fff;
}

.dropdown .item svg {
    position: absolute;
    left: 5px;
    width: 15px;
    height: 15px;
}

.dropdown kbd {
    margin-left: auto;
    font: inherit;
}

.dropdown u {
    text-underline-offset: 2px;
}

.dropdown hr {
    height: 4px;
    margin: 0 3px;
    border: none;
    background: linear-gradient(#696969, #696969) no-repeat 0 0 / 100% 1px;
}

.dropdown .more::after {
    content: "";
    position: absolute;
    right: 4px;
    border: 4px solid transparent;
    border-left: 5px solid #dce4f4;
    border-right: none;
}

.dropdown .selected {
    background: linear-gradient(#5b87c2, #5b87c2) no-repeat center / 100% 20px;
}

.dropdown .callout {
    inset: -5px -9px -6px -5px;
}

.signin {
    display: flex;
    align-items: center;
    width: 120px;
    padding: 0 4px 0 5px;
    background-color: #d0d0d0;
    color: #000;
}

.signin svg {
    width: 16px;
    height: 16px;
    margin-right: 5px;
}

.signin .caret {
    margin-left: auto;
}

.workspaces-label {
    margin: 3px 5px 0 18px;
    font-size: 11px;
}

.workspace {
    width: 134px;
    height: 21px;
    margin-right: 3px;
    font-size: 11px;
}

/* main toolbar */
.toolbar {
    height: 33px;
    display: flex;
    align-items: center;
    padding: 0 9px;
}

.toolbar button {
    width: 32px;
    height: 29px;
    display: flex;
    align-items: center;
    justify-content: center;
}

.toolbar .active {
    width: 30px;
    margin: 0 1px;
    border-radius: 3px;
}

.toolbar svg {
    width: 24px;
    height: 24px;
}

.toolbar svg.sm {
    width: 22px;
    height: 18px;
}

.toolbar .sep {
    width: 2px;
    height: 17px;
    margin: 0 2px;
    background-color: #1c1c1c;
}

.toolbar select {
    align-self: flex-start;
    margin-top: 4px;
}

.toolbar .filter {
    width: 68px;
    margin-left: 1px;
    margin-right: 2px;
}

.toolbar .coords {
    width: 64px;
    margin-right: 273px;
}

.toolbar .selset {
    width: 124px;
    margin-right: 2px;
    padding-right: 14px;
    font-size: 12px;
}

/* ribbon */
.ribbon-row {
    display: flex;
    height: 78px;
}

.ribbon-row .vgrip {
    height: 70px;
    margin: 3px 3px 0 2px;
}

.ribbon {
    flex: 1;
    display: flex;
    height: 22px;
    background-color: #515151;
    border-top: 1px solid #6c6c6c;
    border-bottom: 2px solid #2b2b2b;
}

.ribbon button {
    padding: 0 22px;
    color: #a8a8a8;
    font-size: 12px;
}

.ribbon button:first-child {
    padding: 0 12px 0 26px;
}

.ribbon .current {
    padding: 0 20px;
    color: #e0e0e0;
    background: linear-gradient(#5c5c5c, #787878);
}

.ribbon .ribbon-menu {
    padding: 0 10px;
}

.ribbon-menu svg {
    width: 22px;
    height: 10px;
    display: block;
}

.scripts {
    display: flex;
    width: 261px;
    padding-left: 4px;
}

.script-grid {
    display: grid;
    grid-template-columns: 38px 23px 43px 26px;
    grid-template-rows: 20px 14px;
    gap: 0 2px;
    margin-left: 2px;
    align-content: start;
}

.script-grid .btn {
    height: 16px;
    line-height: 15px;
}

.script-grid select {
    height: 20px;
}

.script-grid input {
    width: 25px;
    height: 19px;
    margin-left: 3px;
    border: 1px solid #eee;
    background-color: #3a3a3a;
    text-align: center;
}

.script-grid .unwrap {
    grid-column: span 2;
    width: 73px;
}

/* work area */
.workarea {
    flex: 1;
    display: flex;
}

.strip {
    width: 40px;
    display: flex;
    flex-direction: column;
    padding-top: 2px;
}

.strip .grip {
    width: 41px;
    margin: 0 0 4px 2px;
}

.strip-body {
    flex: 1;
    display: flex;
    flex-direction: column;
    justify-content: flex-end;
    background: linear-gradient(90deg, #313131 90%, #242424);
}

.expand {
    width: 20px;
    height: 20px;
    margin: 0 0 10px 10px;
    border-radius: 3px;
    background-color: #505050;
    display: flex;
    align-items: center;
    justify-content: center;
}

.expand i {
    border: 5px solid transparent;
    border-left: 6px solid #ddd;
    border-right: none;
}

.layout {
    height: 45px;
    margin: 0 0 1px 4px;
    padding: 8px 2px 8px 3px;
    border-radius: 4px 0 0 4px;
    background: linear-gradient(#5a6f90, #3c7ad4);
}

.layout i {
    display: block;
    height: 28px;
    border: 1px solid #2f3947;
    background: linear-gradient(#5d6470, #52657f);
}

/* scene explorer */
.explorer {
    width: 312px;
    display: flex;
    flex-direction: column;
    padding: 2px 5px 0 9px;
}

.explorer .grip {
    margin-left: 2px;
}

.explorer-menu {
    display: flex;
    gap: 18px;
    height: 29px;
    padding: 2px 0 0 15px;
    font-size: 12px;
}

.explorer-menu button {
    color: #fff;
}

.explorer-find, .explorer-foot {
    display: flex;
    align-items: center;
    height: 24px;
    padding-left: 4px;
}

.explorer-find input {
    width: 150px;
    height: 23px;
    border: 1px solid #686868;
}

.explorer-find button, .explorer-foot button {
    width: 24px;
    height: 24px;
    display: flex;
    align-items: center;
    justify-content: center;
}

.explorer-find .active {
    margin-left: 1px;
}

.explorer svg {
    width: 16px;
    height: 16px;
    flex: none;
    color: #d8d8d8;
}

.bar {
    width: 2px;
    height: 23px;
    margin: 0 2px;
    border-left: 1px solid #222;
    border-right: 1px solid #777;
}

.explorer-body {
    flex: 1;
    display: flex;
    padding-top: 2px;
}

.categories {
    width: 24px;
    padding-top: 4px;
}

.categories button {
    display: flex;
    align-items: center;
    justify-content: center;
    width: 22px;
    height: 20px;
    margin-bottom: 3px;
}

.categories hr {
    width: 19px;
    height: 2px;
    margin: 2px 0 4px 1px;
    border: none;
    background-color: #8a8a8a;
    border-top: 1px solid #222;
}

.tree {
    flex: 1;
    margin-bottom: 2px;
    border: 1px solid #3a3a3a;
}

.tree table {
    width: 100%;
    border-collapse: collapse;
    table-layout: fixed;
}

.col-icons {
    width: 50px;
}

.col-frozen {
    width: 64px;
}

.tree th {
    height: 21px;
    padding: 0 2px;
    border: 1px solid #5c5c5c;
    font-weight: normal;
    text-align: left;
    color: #fff;
    white-space: nowrap;
}

.sort {
    float: right;
    margin-top: 5px;
    border: 4px solid transparent;
    border-bottom: 6px solid #fff;
    border-top: none;
}

.tree td {
    height: 18px;
    padding: 0;
    line-height: 16px;
    color: #fff;
    white-space: nowrap;
}

.tree td:first-child {
    padding-left: 18px;
}

.tree td:first-child svg {
    width: 15px;
    height: 15px;
    vertical-align: middle;
}

.tree td:nth-child(2) {
    padding-left: 3px;
    background-color: #4c4c4c;
    border-right: 1px solid #626262;
}

.tree td:nth-child(3) {
    text-align: center;
    background-color: #4c4c4c;
}

.tree tr:nth-child(even) td:nth-child(n+2) {
    background-color: #575757;
}

.tree td:nth-child(3) svg {
    width: 12px;
    height: 12px;
    color: #333;
    vertical-align: middle;
}

.tree .off td {
    color: #8c8c8c;
}

.tree .parent td:first-child {
    padding-left: 7px;
}

.tree .parent td:first-child::before {
    content: "";
    display: inline-block;
    margin-right: 5px;
    border: 5px solid transparent;
    border-left: 6px solid #fff;
    border-right: none;
    vertical-align: middle;
}

.explorer-foot {
    margin-bottom: 2px;
}

.explorer-foot input {
    width: 145px;
    height: 23px;
    padding-left: 2px;
    border: 1px solid #686868;
    color: #ff0;
    font-size: 12px;
}

.explorer-foot .caret {
    margin: 0 4px 0 4px;
    border-width: 3px 3px 0;
}

.overflow {
    margin: 0 4px 0 auto;
    align-self: flex-start;
    font-size: 16px;
    line-height: 10px;
    color: #5a5ab0;
}

/* viewport */
.viewport {
    flex: 1;
    position: relative;
    overflow: hidden;
    border: 2px solid #7d6527;
    background: linear-gradient(#171717, #4b4b4b);
}

.viewport-label {
    position: absolute;
    top: 5px;
    left: 3px;
    color: #c8c8c8;
    font-size: 12px;
}

.scene {
    position: absolute;
    width: 100%;
    height: 100%;
}

.compass {
    fill: #777;
    font-size: 11px;
}

.cube {
    fill: #5a5a5a;
    font-size: 8px;
    font-weight: bold;
}

.dir {
    fill: #999;
    font-size: 11px;
    font-weight: bold;
}

.axis {
    font-size: 11px;
    font-weight: bold;
}

.x { fill: #c01414; }
.y { fill: #148a1e; }
.z { fill: #1414b8; }

/* command panel */
.command {
    width: 247px;
    padding: 2px 4px 0 6px;
}

.tabs {
    display: flex;
    gap: 2px;
    margin-top: 4px;
    border-bottom: 1px solid #3a3a3a;
}

.tabs button {
    width: 30px;
    height: 26px;
    background-color: #3c3c3c;
    display: flex;
    align-items: center;
    justify-content: center;
}

.tabs .current {
    width: 26px;
    margin: 0 2px 0 1px;
    background: none;
    border: 1px dotted #ccc;
}

.tabs svg {
    width: 16px;
    height: 16px;
}

.kinds svg {
    width: 16px;
    height: 16px;
}

.kinds {
    display: flex;
    gap: 2px;
    margin: 5px 0 7px 4px;
}

.kinds button {
    width: 22px;
    height: 22px;
    border-radius: 2px;
    display: flex;
    align-items: center;
    justify-content: center;
}

.primitives {
    display: block;
    width: 234px;
    margin: 0 0 5px 3px;
    font-size: 12px;
}

.rollout {
    margin: 0 9px 3px 3px;
    background-color: #515151;
    border: 1px solid #3d3d3d;
    border-radius: 2px;
    padding-bottom: 4px;
}

.rollout h2 {
    display: flex;
    align-items: center;
    padding: 2px 6px 3px;
    font-size: 12px;
    color: #fff;
}

.rollout h2::before {
    content: "";
    margin-right: 6px;
    border: 3px solid transparent;
    border-top: 5px solid #ccc;
    border-bottom: none;
}

.rollout h2::after {
    content: "";
    width: 7px;
    height: 6px;
    margin-left: auto;
    background: radial-gradient(circle, #999 0 1px, transparent 1px) 0 0 / 3px 3px;
}

.autogrid {
    display: flex;
    align-items: center;
    margin-left: 64px;
    height: 18px;
    color: #858585;
}

.autogrid input {
    appearance: none;
    width: 11px;
    height: 11px;
    margin-right: 2px;
    background-color: #4a4a4a;
    border: 1px solid #474747;
}

.types {
    display: grid;
    grid-template-columns: 68px 68px;
    grid-auto-rows: 17px;
    gap: 4px 10px;
    margin: 1px 0 0 38px;
}

.types .btn {
    line-height: 16px;
    border: 1px solid #4a4a4a;
}

.name-color {
    display: flex;
    gap: 4px;
    margin: 4px 0 3px 36px;
}

.name-color input {
    width: 132px;
    height: 20px;
    background-color: #575757;
    border: 1px solid #484848;
}

.swatch {
    width: 17px;
    height: 20px;
    background-color: #c52f80;
    border: 1px solid #111;
}

/* time slider and track bar */
.timeline {
    display: flex;
    padding: 5px 0 0 2px;
}

.timeline .vgrip {
    height: 44px;
    margin-right: 5px;
}

.timeline-body {
    flex: 1;
}

.slider-row {
    display: flex;
    gap: 2px;
    height: 21px;
}

.slider-row .btn {
    width: 14px;
    height: 16px;
    line-height: 16px;
    font-size: 12px;
}

.slider-row .thumb {
    width: 123px;
}

.track {
    display: flex;
    border-top: 1px solid #111;
}

.mini {
    width: 49px;
    height: 25px;
    padding-right: 9px;
}

.mini svg {
    width: 15px;
    height: 11px;
}

.frames {
    flex: 1;
    margin-right: 50px;
    padding: 0 6px 0 7px;
    background-color: #2a2a2a;
}

.ticks {
    display: flex;
    justify-content: space-between;
}

.tick {
    width: 1px;
    height: 11px;
    background-color: #666;
    display: flex;
    flex-direction: column;
    align-items: center;
}

.tick.major {
    height: 25px;
}

.tick span {
    margin-top: 11px;
    line-height: 14px;
    font-size: 12px;
    color: #ccc;
}

.tick.now {
    box-shadow: 0 0 0 3px #7a7220;
    background-color: #a89f30;
    clip-path: inset(0 -3px);
}

.tick.now span {
    color: #e8e05a;
}

/* status bar */
.status {
    height: 56px;
    display: flex;
    align-items: flex-start;
    padding: 5px 11px 0 4px;
}

.listener {
    width: 97px;
    display: flex;
    flex-direction: column;
    gap: 1px;
}

.listener input {
    height: 22px;
    padding-left: 5px;
    border: 1px solid #fff;
    border-top-color: #888;
    border-left-color: #888;
    background-color: #fff;
    color: #00e;
    font-family: "Liberation Mono", monospace;
    font-size: 12px;
    font-weight: bold;
}

.listener input:first-child {
    background-color: #dcc4c4;
}

.messages {
    flex: 1;
    margin-left: 5px;
    padding: 1px 0 0 3px;
    border-left: 2px solid #1c1c1c;
    color: #fff;
}

.messages p {
    line-height: 25px;
}

.status svg {
    width: 16px;
    height: 16px;
    display: block;
    margin: 0 auto;
}

.coordinates {
    display: flex;
    flex-direction: column;
    gap: 4px;
    padding-top: 2px;
    margin-right: 4px;
}

.xyz {
    display: flex;
    align-items: center;
    height: 22px;
}

.xyz button {
    width: 27px;
}

.xyz .dark {
    color: #252525;
}

.xyz label {
    width: 14px;
    margin-left: 1px;
    text-align: left;
    color: #fff;
}

.xyz input {
    width: 58px;
    height: 18px;
    padding-left: 4px;
    margin-right: 11px;
    background-color: #575757;
    color: #8f8f8f;
    border: 1px solid #4e4e4e;
}

.grid-size {
    width: 104px;
    margin-left: 5px;
    color: #f0f0f0;
}

.tag {
    display: flex;
    align-items: center;
    justify-content: flex-end;
}

.tag .active {
    width: 21px;
    height: 20px;
    border-radius: 3px;
}

.playback {
    display: flex;
    flex-direction: column;
    gap: 2px;
    margin-right: 11px;
    padding-top: 2px;
}

.playback > div {
    display: flex;
    height: 20px;
    align-items: center;
}

.playback button {
    width: 24px;
    height: 18px;
}

.playback .edge {
    border-left: 1px solid #151515;
}

.spinner {
    display: flex;
    align-items: center;
    width: 74px;
    height: 18px;
    padding: 0 4px;
    background-color: #636363;
    border-left: 1px solid #151515;
    border-right: 2px solid #151515;
}

.spinner input {
    flex: 1;
    width: 20px;
}

.spinner i {
    width: 6px;
    height: 10px;
    background-color: #ddd;
    clip-path: polygon(50% 0, 100% 40%, 0 40%, 0 60%, 100% 60%, 50% 100%, 0 60%, 0 40%);
}

.keys {
    display: flex;
    gap: 5px;
    padding-top: 2px;
    font-size: 12px;
}

.bigkey {
    width: 42px;
    height: 42px;
}

.status .bigkey svg {
    width: 30px;
    height: 30px;
}

.keymodes {
    display: grid;
    gap: 2px;
}

.keymodes .btn {
    width: 46px;
    height: 20px;
}

.keysets {
    width: 114px;
}

.keysets select {
    width: 100%;
}

.keysets > div {
    display: flex;
    gap: 5px;
    padding-top: 3px;
}

.keysets .fly {
    width: 21px;
}

.keysets .btn {
    flex: 1;
    height: 20px;
}

.nav {
    display: grid;
    grid-template-columns: repeat(4, 23px);
    grid-auto-rows: 22px;
    margin-left: 8px;
}
```
